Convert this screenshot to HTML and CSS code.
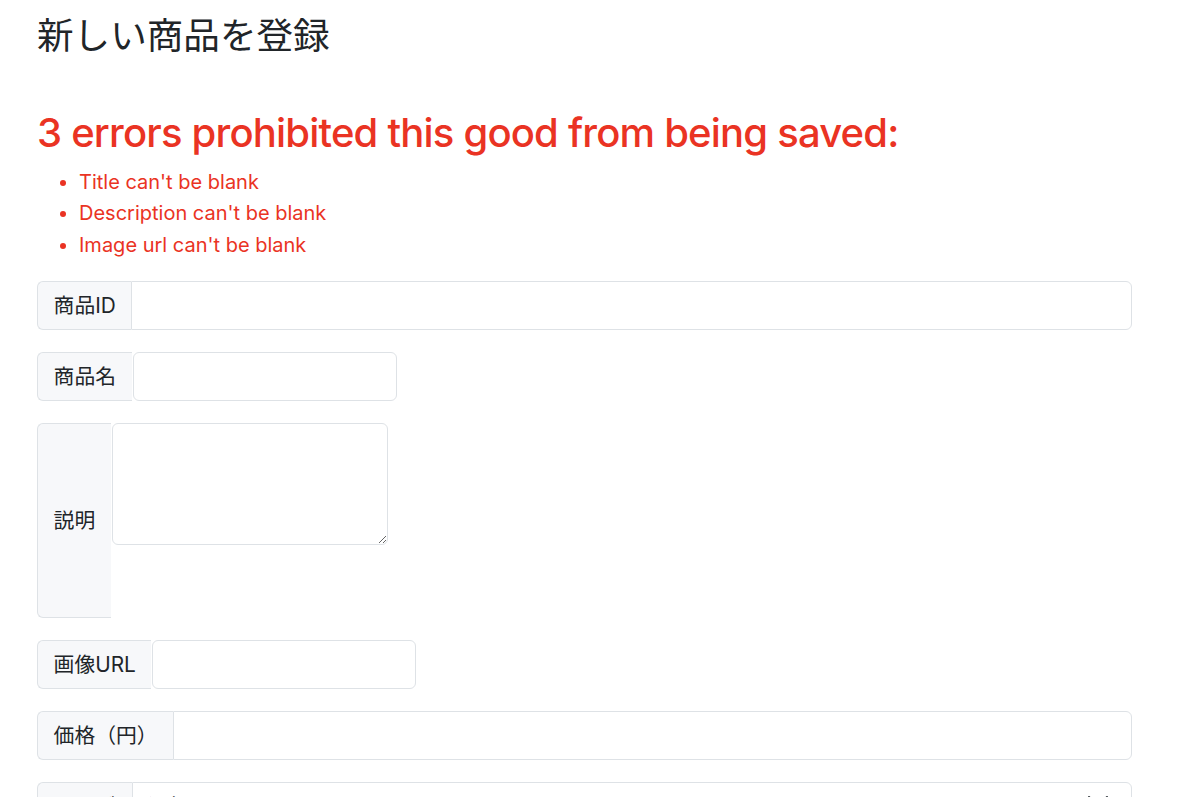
FILE: index.html
```html
<!DOCTYPE html>
<html lang="ja">
<head>
<meta charset="utf-8">
<title>新しい商品を登録</title>
<link rel="stylesheet" href="styles.css">
</head>
<body>
<div class="page">
  <h1 class="title">新しい商品を登録</h1>
  <div class="errors">
    <h2 class="errors-title">3 errors prohibited this good from being saved:</h2>
    <ul class="errors-list">
      <li>Title can't be blank</li>
      <li>Description can't be blank</li>
      <li>Image url can't be blank</li>
    </ul>
  </div>
  <form class="form">
    <div class="group">
      <span class="addon">商品ID</span>
      <input class="control joined" type="text">
    </div>
    <div class="group">
      <span class="addon">商品名</span>
      <input class="control short" type="text">
    </div>
    <div class="group tall">
      <span class="addon">説明</span>
      <textarea class="control area"></textarea>
    </div>
    <div class="group">
      <span class="addon">画像URL</span>
      <input class="control short" type="text">
    </div>
    <div class="group">
      <span class="addon">価格（円）</span>
      <input class="control joined" type="text">
    </div>
    <div class="group">
      <span class="addon">カテゴ</span>
      <div class="control joined select">選択してください<svg class="arrow" viewBox="0 0 20 11" width="20" height="11"><path d="M1 1l9 9 9-9" fill="none" stroke="#343a40" stroke-width="2" stroke-linecap="round" stroke-linejoin="round"/></svg></div>
    </div>
  </form>
</div>
</body>
</html>
```

FILE: styles.css
```css
* { box-sizing: border-box; }
html, body { margin: 0; padding: 0; background: #fff; }
body {
  font-family: Inter, "Noto Sans CJK JP", sans-serif;
  font-size: 20.8px;
  line-height: 1.5;
  color: #212529;
}
.page {
  width: 1095px;
  margin-left: 37px;
  padding-top: 12px;
}
.title {
  font-family: "Noto Sans CJK JP", sans-serif;
  font-weight: 400;
  font-size: 36.6px;
  line-height: 1.2;
  margin: 0 0 53px;
}
.errors { color: #ea3323; }
.errors-title {
  font-weight: 500;
  font-size: 40px;
  line-height: 1.2;
  margin: 0 0 10px;
  letter-spacing: -0.8px;
}
.errors-list {
  margin: 0 0 20px;
  padding-left: 42px;
  font-size: 20px;
  line-height: 31.5px;
}
.form { display: flex; flex-direction: column; gap: 22px; }
.group { display: flex; align-items: stretch; height: 49px; }
.group.tall { height: 195px; align-items: flex-start; }
.addon {
  display: flex;
  align-items: center;
  padding: 0 15.6px;
  background: #f7f8fa;
  border: 1px solid #dee2e6;
  border-right: 0;
  border-radius: 6px 0 0 6px;
  white-space: nowrap;
  height: 100%;
  margin-right: 1px;
}
.control {
  font: inherit;
  color: #212529;
  background: #fff;
  border: 1px solid #dee2e6;
  border-radius: 6px;
  padding: 7.8px 15.6px;
  margin: 0;
  outline: none;
}
.joined { flex: 1; border-radius: 0 6px 6px 0; margin-left: -1px; }
.short { width: 264px; height: 49px; }
.area { width: 276px; height: 122px; resize: both; }
.select { position: relative; display: flex; align-items: center; }
.arrow {
  position: absolute;
  right: 23px;
  top: 13px;
}
```
